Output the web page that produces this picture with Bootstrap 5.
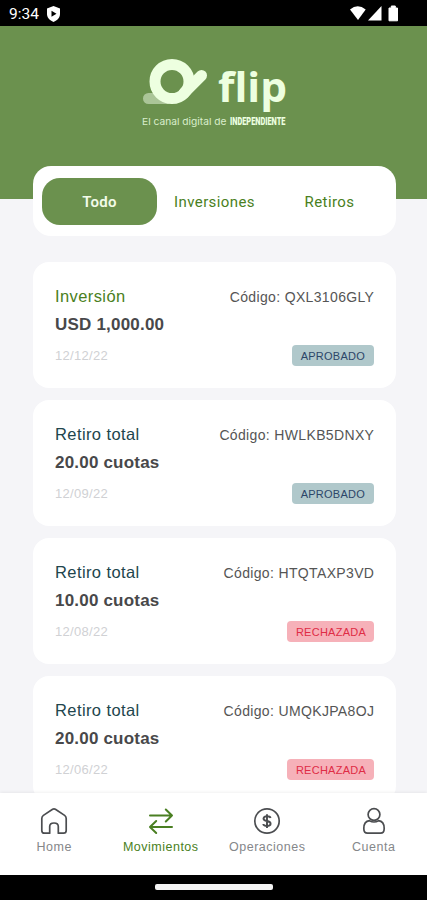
<!DOCTYPE html>
<html lang="es">
<head>
<meta charset="utf-8">
<meta name="viewport" content="width=device-width, initial-scale=1">
<title>flip – Movimientos</title>
<link href="https://cdn.jsdelivr.net/npm/bootstrap@5.3.0/dist/css/bootstrap.min.css" rel="stylesheet">
<style>
:root{--flip:#6b914e;--flip-dark:#4a7f22}
body{font-family:"Liberation Sans",Arial,sans-serif;background:#f5f5f8;color:#48484a}
.phone{width:427px;height:900px}
.status{height:26px;background:#000;color:#fff;padding:0 28px 0 9px;font:400 15.5px/28px Roboto,sans-serif}
.hero{height:173px;background:var(--flip)}
.hero svg{margin-top:28px}
.word{font-family:"Open Sans","Noto Sans",sans-serif;font-weight:700;font-size:41px;font-variant-ligatures:none}
.tag{font-family:Inter,"Open Sans",sans-serif;font-size:9.5px}
.tabs{margin:-33px 31px 0 33px;height:70px;border-radius:18px;padding:12px 9px 11px}
.tabs .nav-link{width:115px;padding:0;line-height:48px;border-radius:18px;color:var(--flip-dark);font-family:Roboto,sans-serif;font-size:15px;letter-spacing:.4px;font-weight:400}
.tabs .nav-link.active{background:var(--flip);color:#f2fbe9;font-weight:600;letter-spacing:.2px}
.moves{margin:26px 31px 0 33px;gap:12px}
.move{height:126px;border:0;border-radius:16px;padding:22px 22px 20px;flex:none}
.kind{font-size:16.5px;line-height:24px;letter-spacing:.4px;color:#21454d}
.kind.inv{color:var(--flip-dark)}
.code{font-size:14px;line-height:26px;letter-spacing:.35px;color:#555;margin-right:-.3px}
.amount{font-size:17px;line-height:29px;letter-spacing:.2px;margin-bottom:5px}
.date{font-size:13px;line-height:22px;letter-spacing:.3px;color:#d0d1d4;padding-top:1px}
.state{font-size:11px;line-height:22px;font-weight:400;letter-spacing:.25px;padding:0 9px;border-radius:4px;height:21px}
.ok{background:#b0c8cb;color:#2c4668}
.no{background:#f6b1b9;color:#df2c45;padding-right:8px}
.bottom{height:82px;padding:14px 0 0 1px;box-shadow:0 -1px 3px rgba(0,0,0,.06)}
.bottom .nav-link{width:106.5px;padding:0;color:#85878a;font-size:12.5px;line-height:18px;letter-spacing:.5px}
.bottom .nav-link.active{color:var(--flip-dark)}
.bottom svg{display:block;margin:0 auto 3px;color:#4b4d50}
.bottom .active svg{color:var(--flip-dark)}
.home-bar{height:25px;background:#000;padding-top:9px}
.home-bar div{width:118px;height:6px;border-radius:2px;background:#f4f4f4}
</style>
<script src="https://cdn.jsdelivr.net/npm/bootstrap@5.3.0/dist/js/bootstrap.bundle.min.js"></script>
</head>
<body>
<div class="phone d-flex flex-column overflow-hidden">
  <div class="status d-flex flex-shrink-0">
    <span>9:34</span>
    <svg class="ms-2" width="15" height="26" viewBox="1 0 15 26"><path d="M7.500 6 14 8.600V14c0 3.600-2.700 6.500-6.500 8C3.700 20.500 1 17.600 1 14V8.600Z" fill="#fff"/><path d="m5.500 10.700 5 3-5 3Z" fill="#000"/></svg>
    <svg class="ms-auto" width="50" height="26" viewBox="349 0 50 26" fill="#fff"><path d="M350 9.500q7.700-6.500 15.700 0L358 20Z"/><path d="M368 20.500 381.500 6v14.500Z"/><path d="M389 8h2.300V6h4v2h2.200v12.800H389Z" stroke="#fff" stroke-linejoin="round"/></svg>
  </div>
  <header class="hero flex-shrink-0 text-center">
    <svg width="167" height="84" viewBox="130 54 167 84" fill="#edffe0">
      <path d="M148.500 98.500H166" stroke="#abc598" stroke-width="11" stroke-linecap="round"/>
      <circle cx="172" cy="81.500" r="17" fill="none" stroke="#edffe0" stroke-width="11"/>
      <path d="m184 93 17.500-17.500" stroke="#edffe0" stroke-width="11" stroke-linecap="round"/>
      <text class="word" x="218" y="101.500" textLength="69" lengthAdjust="spacingAndGlyphs">flip</text>
      <text class="tag" x="142" y="125" textLength="84.500" lengthAdjust="spacingAndGlyphs" fill="#d9edcb">El canal digital de</text>
      <text x="230" y="125" font-family="Roboto, sans-serif" font-weight="900" font-size="10.500" textLength="55.500" lengthAdjust="spacingAndGlyphs">INDEPENDIENTE</text>
    </svg>
  </header>
  <nav class="tabs nav nav-pills bg-white flex-shrink-0 flex-nowrap text-center position-relative">
    <a class="nav-link active" href="#">Todo</a>
    <a class="nav-link" href="#">Inversiones</a>
    <a class="nav-link" href="#">Retiros</a>
  </nav>
  <main class="moves d-flex flex-column flex-grow-1 overflow-hidden">
    <div class="move card">
      <div class="d-flex justify-content-between"><span class="kind inv">Inversión</span><span class="code">Código: QXL3106GLY</span></div>
      <div class="amount fw-bold">USD 1,000.00</div>
      <div class="d-flex justify-content-between align-items-center"><span class="date">12/12/22</span><span class="state badge ok">APROBADO</span></div>
    </div>
    <div class="move card">
      <div class="d-flex justify-content-between"><span class="kind">Retiro total</span><span class="code">Código: HWLKB5DNXY</span></div>
      <div class="amount fw-bold">20.00 cuotas</div>
      <div class="d-flex justify-content-between align-items-center"><span class="date">12/09/22</span><span class="state badge ok">APROBADO</span></div>
    </div>
    <div class="move card">
      <div class="d-flex justify-content-between"><span class="kind">Retiro total</span><span class="code">Código: HTQTAXP3VD</span></div>
      <div class="amount fw-bold">10.00 cuotas</div>
      <div class="d-flex justify-content-between align-items-center"><span class="date">12/08/22</span><span class="state badge no">RECHAZADA</span></div>
    </div>
    <div class="move card">
      <div class="d-flex justify-content-between"><span class="kind">Retiro total</span><span class="code">Código: UMQKJPA8OJ</span></div>
      <div class="amount fw-bold">20.00 cuotas</div>
      <div class="d-flex justify-content-between align-items-center"><span class="date">12/06/22</span><span class="state badge no">RECHAZADA</span></div>
    </div>
  </main>
  <nav class="bottom nav bg-white flex-shrink-0 flex-nowrap text-center position-relative">
    <a class="nav-link" href="#"><svg width="28" height="28" viewBox="0 0 28 28" fill="none" stroke="currentColor" stroke-width="1.700" stroke-linejoin="round"><path d="M1.800 11.500Q1.800 9.600 3.400 8.400L12.600 2.300Q14 1.400 15.400 2.300L24.600 8.400Q26.200 9.600 26.200 11.500V23.500Q26.200 26.200 23.500 26.200H18.300V19.500Q18.300 16 14 16T9.700 19.500V26.200H4.500Q1.800 26.200 1.800 23.500Z"/></svg>Home</a>
    <a class="nav-link active" href="#"><svg width="28" height="28" viewBox="0 0 28 28" fill="none" stroke="currentColor" stroke-width="2" stroke-linecap="round" stroke-linejoin="round"><path d="M3 8.500H25M18.800 2.500 25 8.500 18.800 14.500M25 20H3M9.200 14 3 20 9.200 26"/></svg>Movimientos</a>
    <a class="nav-link" href="#"><svg width="28" height="28" viewBox="0 0 28 28" fill="none" stroke="currentColor" stroke-width="1.700"><circle cx="14" cy="14" r="12.200"/><path d="M17.600 11Q17 9.300 14 9.300T10.500 11.500Q10.500 13.300 14 14T17.600 16.700Q17.600 18.900 14 18.900T10.300 17M14 7.300V21" stroke-width="1.900"/></svg>Operaciones</a>
    <a class="nav-link" href="#"><svg width="28" height="28" viewBox="0 0 28 28" fill="none" stroke="currentColor" stroke-width="1.700" stroke-linejoin="round"><circle cx="14" cy="7.500" r="5.900"/><path d="M9.500 13.700C5.500 14.200 3.800 17 3.800 21.500Q3.800 26.200 7.500 26.200H20.500Q24.200 26.200 24.200 21.500C24.200 17 22.500 14.200 18.500 13.700Q14 16.300 9.500 13.700Z"/></svg>Cuenta</a>
  </nav>
  <div class="home-bar flex-shrink-0"><div class="mx-auto"></div></div>
</div>
</body>
</html>
